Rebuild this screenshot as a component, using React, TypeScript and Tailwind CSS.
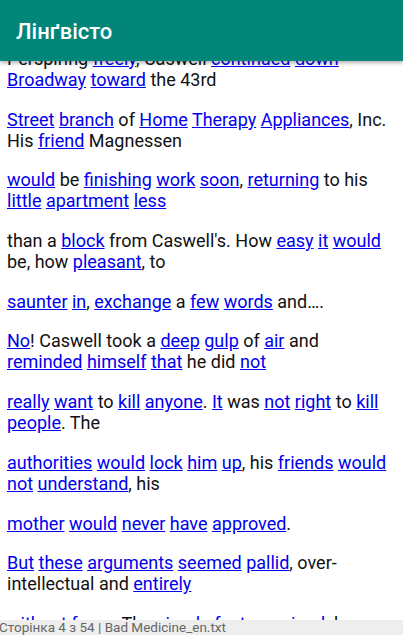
import React from "react";

// paragraphs of the page; words in [brackets] are dictionary links
const paragraphs: string[] = [
  "Perspiring [freely], Caswell [continued] [down] [Broadway] [toward] the 43rd",
  "[Street] [branch] of [Home] [Therapy] [Appliances], Inc. His [friend] Magnessen",
  "[would] be [finishing] [work] [soon], [returning] to his [little] [apartment] [less]",
  "than a [block] from Caswell's. How [easy] [it] [would] be, how [pleasant], to",
  "[saunter] [in], [exchange] a [few] [words] and….",
  "[No]! Caswell took a [deep] [gulp] of [air] and [reminded] [himself] [that] he did [not]",
  "[really] [want] to [kill] [anyone]. [It] was [not] [right] to [kill] [people]. The",
  "[authorities] [would] [lock] [him] [up], his [friends] [would] [not] [understand], his",
  "[mother] [would] [never] [have] [approved].",
  "[But] [these] [arguments] [seemed] [pallid], over-intellectual and [entirely]",
  "[without] [force]. The [simple] [fact] [remained]: he [wanted] to",
];

const Paragraph = ({ text }: { text: string }) => {
  const parts = text.split(/(\[[^\]]+\])/g).filter((p) => p !== "");
  return (
    <p className="mb-[18.7px] text-[18px] leading-[21px] text-[#111111]">
      {parts.map((part, i) =>
        part.startsWith("[") ? (
          <a key={i} href="#" className="text-[#0000ee] underline">
            {part.slice(1, -1)}
          </a>
        ) : (
          <span key={i}>{part}</span>
        )
      )}
    </p>
  );
};

const App = () => {
  return (
    <div
      className="relative h-[635px] w-[403px] overflow-hidden bg-white"
      style={{ fontFamily: "Roboto, 'Noto Sans', sans-serif" }}
    >
      <div className="px-[7px] pt-[48px]">
        {paragraphs.map((p, i) => (
          <Paragraph key={i} text={p} />
        ))}
      </div>

      {/* app bar */}
      <div className="absolute left-0 right-0 top-0 flex h-[61px] items-center bg-[#02867a] px-4 shadow-[0_2px_4px_rgba(0,0,0,0.3)]">
        <h1 className="pt-px text-[22px] font-medium text-white">Лінґвісто</h1>
      </div>

      {/* status line */}
      <div className="absolute bottom-0 left-0 right-0 h-[15px] bg-[#eeeeee] text-[13.5px] leading-[15px] text-[#666666]">
        <span className="-ml-px">Сторінка 4 з 54 | Bad Medicine_en.txt</span>
      </div>
    </div>
  );
};

export default App;
